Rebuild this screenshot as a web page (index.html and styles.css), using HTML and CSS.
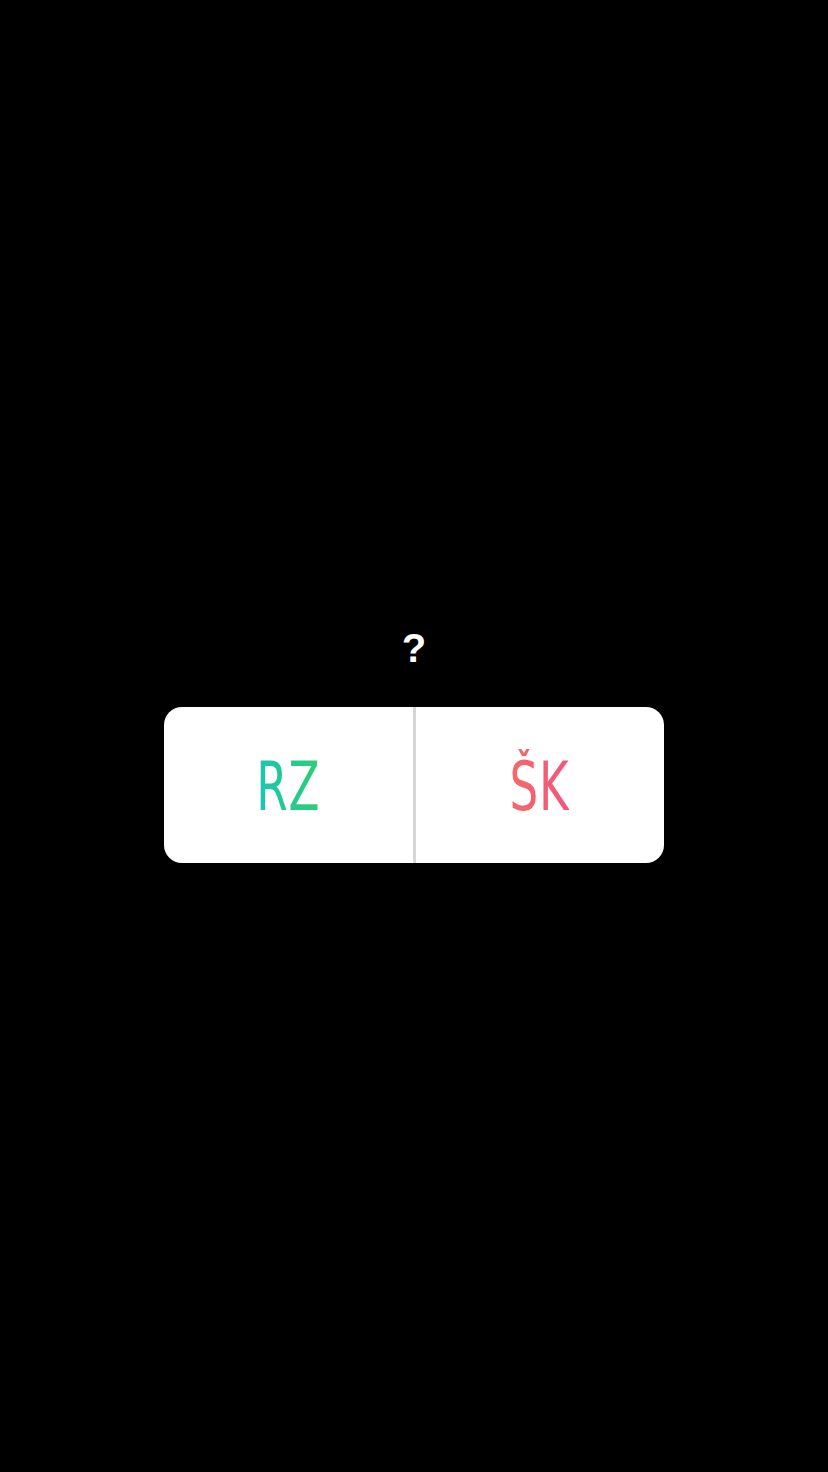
FILE: index.html
```html
<!DOCTYPE html>
<html lang="cs">
<head>
<meta charset="utf-8">
<title>Poll</title>
<link rel="stylesheet" href="styles.css">
</head>
<body>
<main class="screen">
  <div class="question">?</div>
  <div class="poll">
    <div class="option"><span class="label label-left">RZ</span></div>
    <div class="divider"></div>
    <div class="option"><span class="label label-right">ŠK</span></div>
  </div>
</main>
</body>
</html>
```
FILE: styles.css
```css
html, body {
  margin: 0;
  padding: 0;
  background: #000;
}
.screen {
  width: 828px;
  height: 1472px;
  display: flex;
  flex-direction: column;
  align-items: center;
  padding-top: 626px;
  box-sizing: border-box;
}
.question {
  font-family: "Liberation Sans", Arial, sans-serif;
  font-weight: bold;
  font-size: 40px;
  line-height: 44px;
  color: #fff;
  height: 44px;
  margin-bottom: 37px;
}
.poll {
  width: 500px;
  height: 156px;
  background: #fff;
  border-radius: 18px;
  display: flex;
  overflow: hidden;
}
.option {
  flex: 1;
  display: flex;
  align-items: center;
  justify-content: center;
}
.divider {
  width: 3px;
  background: #d6d6d6;
}
.label {
  font-family: "DejaVu Sans Condensed", "DejaVu Sans", sans-serif;
  font-size: 68px;
  line-height: 1;
  letter-spacing: 1px;
  -webkit-background-clip: text;
  background-clip: text;
  color: transparent;
  display: inline-block;
  transform: scaleX(0.74);
  padding-top: 4px;
}
.label-left {
  background-image: linear-gradient(90deg, #19c6b4 0%, #2ccf72 100%);
}
.label-right {
  background-image: linear-gradient(90deg, #f46a68 0%, #f3557c 100%);
}
```
